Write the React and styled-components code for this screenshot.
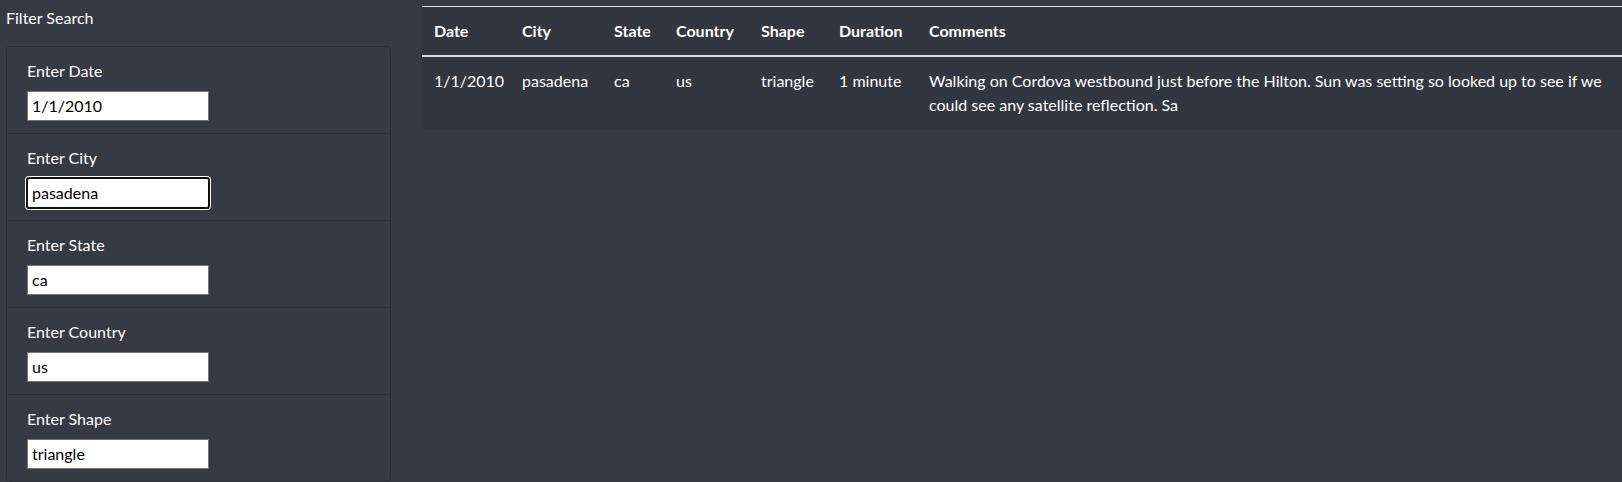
import { useState } from 'react';
import styled, { createGlobalStyle } from 'styled-components';

const GlobalStyle = createGlobalStyle`
  html, body {
    margin: 0;
    padding: 0;
    background: #363a42;
  }

  body {
    font-family: Lato, "Open Sans", sans-serif;
    font-size: 16px;
    line-height: 24px;
    color: #fff;
  }
`;

const StyledPage = styled.div`
  min-height: 100vh;
  display: flex;
  align-items: flex-start;
  padding-left: 6px;
  box-sizing: border-box;
`;

const StyledSidebar = styled.aside`
  width: 385px;
  flex-shrink: 0;
  padding-top: 6px;
`;

const StyledTitle = styled.div`
  margin-bottom: 16px;
`;

const StyledFilterList = styled.ul`
  list-style: none;
  margin: 0;
  padding: 0;
  border: 1px solid #2c3036;
  border-radius: 4px;
`;

const StyledFilterItem = styled.li`
  padding: 12px 20px;
  border-bottom: 1px solid #2c3036;

  &:last-child {
    border-bottom: none;
  }

  label {
    display: block;
    margin-bottom: 8px;
  }
`;

const StyledInput = styled.input`
  display: block;
  width: 182px;
  height: 30px;
  box-sizing: border-box;
  padding: 0 4px 1px;
  border: 1px solid ${({ $focused }) => ($focused ? '#101010' : '#767676')};
  border-radius: ${({ $focused }) => ($focused ? '2px' : '0')};
  box-shadow: ${({ $focused }) =>
    $focused ? '0 0 0 1px #101010, 0 0 0 2px #fff' : 'none'};
  background: #fff;
  color: #000;
  caret-color: #000;
  font-family: inherit;
  font-size: 16px;
  outline: none;
`;

const StyledMain = styled.main`
  margin-left: 31px;
  padding-top: 6px;
`;

const StyledTable = styled.table`
  width: 1200px;
  table-layout: fixed;
  border-collapse: collapse;
  background: #32363e;
  color: #fff;

  th,
  td {
    padding: 12px;
    text-align: left;
    vertical-align: top;
  }

  th {
    font-weight: 700;
    border-top: 1px solid #dee2e6;
    border-bottom: 2px solid #dee2e6;
  }
`;

const columns = [
  { key: 'date', label: 'Date', width: 88 },
  { key: 'city', label: 'City', width: 92 },
  { key: 'state', label: 'State', width: 62 },
  { key: 'country', label: 'Country', width: 85 },
  { key: 'shape', label: 'Shape', width: 78 },
  { key: 'duration', label: 'Duration', width: 90 },
  { key: 'comments', label: 'Comments', width: 705 },
];

const sightings = [
  {
    date: '1/1/2010',
    city: 'pasadena',
    state: 'ca',
    country: 'us',
    shape: 'triangle',
    duration: '1 minute',
    comments:
      'Walking on Cordova westbound just before the Hilton. Sun was setting so looked up to see if we could see any satellite reflection. Sa',
  },
];

const filterFields = [
  { key: 'date', label: 'Enter Date' },
  { key: 'city', label: 'Enter City' },
  { key: 'state', label: 'Enter State' },
  { key: 'country', label: 'Enter Country' },
  { key: 'shape', label: 'Enter Shape' },
];

export default function App() {
  const [filters, setFilters] = useState({
    date: '1/1/2010',
    city: 'pasadena',
    state: 'ca',
    country: 'us',
    shape: 'triangle',
  });

  // put the caret at the end of the focused field
  const moveCaretToEnd = (e) => {
    const len = e.target.value.length;
    e.target.setSelectionRange(len, len);
  };

  return (
    <>
      <GlobalStyle />
      <StyledPage>
        <StyledSidebar>
          <StyledTitle>Filter Search</StyledTitle>
          <StyledFilterList>
            {filterFields.map((field) => (
              <StyledFilterItem key={field.key}>
                <label htmlFor={field.key}>{field.label}</label>
                <StyledInput
                  id={field.key}
                  type="text"
                  value={filters[field.key]}
                  $focused={field.key === 'city'}
                  autoFocus={field.key === 'city'}
                  onFocus={moveCaretToEnd}
                  onChange={(e) =>
                    setFilters({ ...filters, [field.key]: e.target.value })
                  }
                />
              </StyledFilterItem>
            ))}
          </StyledFilterList>
        </StyledSidebar>

        <StyledMain>
          <StyledTable>
            <colgroup>
              {columns.map((col) => (
                <col key={col.key} style={{ width: col.width }} />
              ))}
            </colgroup>
            <thead>
              <tr>
                {columns.map((col) => (
                  <th key={col.key}>{col.label}</th>
                ))}
              </tr>
            </thead>
            <tbody>
              {sightings.map((row, i) => (
                <tr key={i}>
                  {columns.map((col) => (
                    <td key={col.key}>{row[col.key]}</td>
                  ))}
                </tr>
              ))}
            </tbody>
          </StyledTable>
        </StyledMain>
      </StyledPage>
    </>
  );
}
